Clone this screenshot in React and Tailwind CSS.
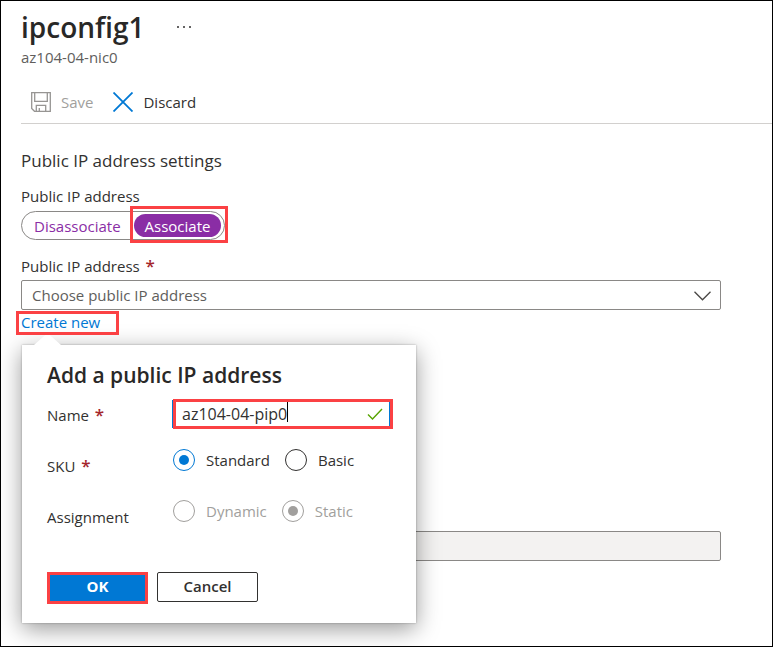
import { useState } from "react";

function Highlight({ className }) {
  return (
    <span
      aria-hidden="true"
      className={`pointer-events-none absolute z-20 border-[3px] border-[#fb4144] ${className}`}
    />
  );
}

function Required() {
  return <span className="ml-0.5 text-[17px] leading-none font-semibold text-[#a4262c]">*</span>;
}

function Radio({ name, label, checked, onChange, disabled }) {
  return (
    <label
      className={`flex items-center gap-[11px] ${disabled ? "text-[#a19f9d]" : "text-[#323130]"}`}
    >
      <input
        type="radio"
        name={name}
        checked={checked}
        onChange={onChange}
        disabled={disabled}
        className="grid size-[22px] shrink-0 appearance-none place-content-center rounded-full border border-[#323130] before:size-[10px] before:rounded-full checked:border-[#0078d4] checked:before:bg-[#0078d4] disabled:border-[#a19f9d] disabled:checked:before:bg-[#a19f9d]"
      />
      {label}
    </label>
  );
}

function AddAddress() {
  const [name, setName] = useState("az104-04-pip0");
  const [sku, setSku] = useState("Standard");
  return (
    <div
      role="dialog"
      aria-labelledby="dialog-title"
      className="absolute top-[33px] left-px z-10 w-[394px] bg-white px-[25px] pt-4 pb-[19px] shadow-[0_6px_22px_rgba(0,0,0,0.4),0_0_2px_rgba(0,0,0,0.3)]"
    >
      <svg
        aria-hidden="true"
        className="absolute -top-3 left-3 h-3 w-[27px]"
        viewBox="0 0 27 12"
      >
        <path d="M0 12 13.5 0 27 12Z" fill="#fff" />
      </svg>
      <h3 id="dialog-title" className="text-[21px] leading-7 font-semibold text-[#292827]">
        Add a public IP address
      </h3>

      <div className="flex h-[51px] items-center">
        <label htmlFor="pip-name" className="w-[125px]">
          Name <Required />
        </label>
        <div className="relative mb-0.5 flex-1">
          <input
            id="pip-name"
            value={name}
            onChange={(e) => setName(e.target.value)}
            className="block h-7 w-full border-x-2 border-[#0078d4] bg-white pr-9 pl-2 text-base outline-none"
          />
          <span aria-hidden="true" className="absolute top-0.5 left-[115px] h-5 w-px bg-black" />
          <svg
            aria-hidden="true"
            className="absolute top-2 right-2 h-3 w-4"
            viewBox="0 0 16 12"
            fill="none"
            stroke="#57a300"
            strokeWidth="1.4"
          >
            <path d="m1 6.500 4.500 4.500L15 1" />
          </svg>
          <Highlight className="-top-px -right-0.5 left-px h-[30px]" />
        </div>
      </div>

      <div role="radiogroup" aria-labelledby="sku-label" className="flex h-[51px] items-center">
        <span id="sku-label" className="w-[126px]">
          SKU <Required />
        </span>
        <div className="flex gap-[15px] pb-3">
          {["Standard", "Basic"].map((option) => (
            <Radio
              key={option}
              name="sku"
              label={option}
              checked={sku === option}
              onChange={() => setSku(option)}
            />
          ))}
        </div>
      </div>

      <div
        role="radiogroup"
        aria-labelledby="assignment-label"
        className="flex h-[51px] items-center"
      >
        <span id="assignment-label" className="w-[126px]">
          Assignment
        </span>
        <div className="flex gap-[15px] pb-3">
          <Radio name="assignment" label="Dynamic" disabled />
          <Radio name="assignment" label="Static" checked readOnly disabled />
        </div>
      </div>

      <div className="mt-[30px] flex gap-[9px]">
        <div className="relative">
          <button className="h-8 w-[101px] bg-[#0078d4] pb-1 font-bold text-white">OK</button>
          <Highlight className="inset-0" />
        </div>
        <button className="h-[30px] w-[101px] rounded-xs border border-[#323130] bg-white pb-0.5 font-semibold text-[#323130]">
          Cancel
        </button>
      </div>
    </div>
  );
}

export default function App() {
  return (
    <main className="min-h-screen border border-black bg-white pl-5 font-['Open_Sans','Noto_Sans',sans-serif] text-[15px] leading-5 text-[#323130]">
      <header>
        <div className="flex items-center gap-8 pt-2">
          <h1 className="text-[28px] leading-9 font-semibold text-[#292827]">ipconfig1</h1>
          <button aria-label="More actions">
            <svg className="h-1 w-4" viewBox="0 0 16 4" fill="#323130" aria-hidden="true">
              <circle cx="2" cy="2" r="1" />
              <circle cx="8" cy="2" r="1" />
              <circle cx="14" cy="2" r="1" />
            </svg>
          </button>
        </div>
        <p className="mt-0.5 leading-5 text-[#605e5c]">az104-04-nic0</p>
        <div className="mt-3 flex h-[45px] items-center gap-5 border-b border-[#d2d0ce] pt-px pl-[10px]">
          <button disabled className="flex items-center gap-[10px] text-[#a19f9d]">
            <svg
              className="size-5"
              viewBox="0 0 20 20"
              fill="none"
              stroke="#979593"
              strokeWidth="1.3"
              aria-hidden="true"
            >
              <path d="M.7.7h18.600v18.600H3.500L.7 16.500Z" />
              <path d="M3.700.7v8.600h12.600V.7M5.300 19.300v-6h9.400v6M8.300 19.300v-3.300" />
            </svg>
            Save
          </button>
          <button className="flex items-center gap-[10px]">
            <svg
              className="size-5"
              viewBox="0 0 20 20"
              fill="none"
              stroke="#0078d4"
              strokeWidth="1.8"
              aria-hidden="true"
            >
              <path d="m.5.5 19 19M19.500.5l-19 19" />
            </svg>
            Discard
          </button>
        </div>
      </header>

      <section className="pt-[25px] pr-[51px]">
        <h2 className="text-[17px] leading-6">Public IP address settings</h2>
        <p id="association-label" className="mt-[13px]">
          Public IP address
        </p>
        <div
          role="group"
          aria-labelledby="association-label"
          className="relative mt-[5px] inline-flex h-[29px] w-[204px] items-center justify-between rounded-full border border-[#8a8886] pr-[3px] pl-3 align-top text-[#8a2da5]"
        >
          <button aria-pressed="false">Disassociate</button>
          <button
            aria-pressed="true"
            className="h-[23px] w-[87px] rounded-full bg-[#8a2da5] text-white"
          >
            Associate
          </button>
          <Highlight className="-top-[6px] -right-1 h-[37px] w-[98px]" />
        </div>

        <label htmlFor="public-ip" className="mt-4 block">
          Public IP address <Required />
        </label>
        <div className="relative mt-1">
          <select
            id="public-ip"
            className="block h-[30px] w-full appearance-none rounded-xs border border-[#8a8886] bg-white px-[10px] text-[#605e5c]"
          >
            <option>Choose public IP address</option>
          </select>
          <svg
            className="pointer-events-none absolute top-[11px] right-[10px] h-[10px] w-[17px]"
            viewBox="0 0 17 10"
            fill="none"
            stroke="#484644"
            strokeWidth="1.3"
            aria-hidden="true"
          >
            <path d="m.5.8 8 8 8-8" />
          </svg>
        </div>
        <div className="relative mt-0.5 h-5">
          <a href="#create" className="text-[#0078d4]">
            Create new
          </a>
          <Highlight className="-top-px -left-[5px] h-6 w-[103px]" />
          <AddAddress />
        </div>
        <div className="mt-[199px] pl-[152px]">
          <input
            disabled
            aria-label="Selected address"
            className="block h-[30px] w-full rounded-xs border border-[#8a8886] bg-[#f3f2f1]"
          />
        </div>
      </section>
    </main>
  );
}
